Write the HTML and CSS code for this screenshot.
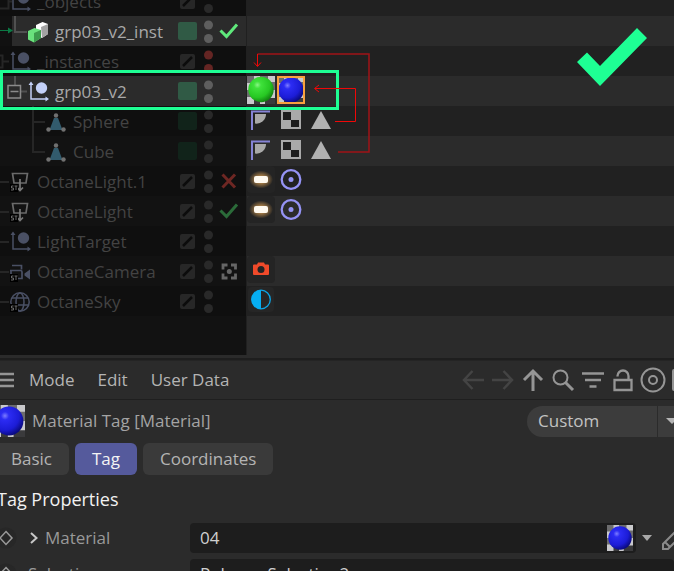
FILE: index.html
```
<!DOCTYPE html>
<html lang="en">
<head>
  <meta charset="UTF-8">
  <meta name="viewport" content="width=device-width, initial-scale=1.0">
  <title>Object Manager</title>
  <link rel="stylesheet" href="styles.css">
</head>
<body>
  <!-- shared icons -->
  <svg class="defs" width="0" height="0" aria-hidden="true">
    <defs>
      <radialGradient id="green-ball" cx="0.36" cy="0.32" r="0.7">
        <stop offset="0" stop-color="#8af487"/><stop offset="0.2" stop-color="#3fe23b"/>
        <stop offset="0.7" stop-color="#27c823"/><stop offset="1" stop-color="#138512"/>
      </radialGradient>
      <radialGradient id="blue-ball" cx="0.36" cy="0.32" r="0.7">
        <stop offset="0" stop-color="#7d7dff"/><stop offset="0.2" stop-color="#2c2cf4"/>
        <stop offset="0.7" stop-color="#1c1cd6"/><stop offset="1" stop-color="#0b0b80"/>
      </radialGradient>
      <radialGradient id="glow">
        <stop offset="0.3" stop-color="#b98a4c"/><stop offset="1" stop-color="#b98a4c" stop-opacity="0"/>
      </radialGradient>
    </defs>
    <symbol id="checker-bg" viewBox="0 0 28 28">
      <path fill="#c9c9cc" d="M0 0h28v28H0z"/>
      <path fill="#6c6c6e" d="M0 0h7v7H0zM13 0h8v6h-8zM21 6h7v8h-7zM0 14h7v7H0z"/>
      <path fill="#3a3a3c" d="M18 22h10v6H18zM7 24h6v4H7z"/>
    </symbol>
    <symbol id="mat-green" viewBox="0 0 28 28">
      <use href="#checker-bg" width="28" height="28"/>
      <circle cx="14" cy="13.500" r="12.700" fill="url(#green-ball)"/>
    </symbol>
    <symbol id="mat-blue" viewBox="0 0 28 28">
      <use href="#checker-bg" width="28" height="28"/>
      <circle cx="14" cy="14" r="12.600" fill="url(#blue-ball)"/>
    </symbol>
    <symbol id="null-obj" viewBox="0 0 22 30">
      <path d="M3 8v15h15" fill="none" stroke="currentColor" stroke-width="1.500"/>
      <path d="M3 5.500l2.500 3.500h-5zM21 23l-3.500-2.500v5z" fill="currentColor"/>
      <circle cx="13.500" cy="12" r="5.700" fill="currentColor"/>
    </symbol>
    <symbol id="poly-obj" viewBox="0 0 20 30">
      <path d="M8 12h4l4.500 12h-13z" fill="#325b6d"/>
      <circle cx="10" cy="9.500" r="2.200" fill="#707070"/>
      <circle cx="2.500" cy="23.500" r="2.200" fill="#707070"/>
      <circle cx="17.500" cy="23.500" r="2.200" fill="#707070"/>
    </symbol>
    <symbol id="st" viewBox="0 0 8 8">
      <path d="M0 0h8v8H0z" fill="#000"/>
      <path d="M3.500 2H1.500v2h2v2H1M4.500 2h3M6 2v4" fill="none" stroke="#6a6a6a"/>
    </symbol>
    <symbol id="light-obj" viewBox="0 0 20 30">
      <path d="M2.500 7.500h15l-1.500 9.500h-12z" fill="none" stroke="#6a6a6a" stroke-width="1.700"/>
      <path d="M10 13v11M7 21.500l3 3 3-3" fill="none" stroke="#7a7a7a" stroke-width="1.700"/>
      <use href="#st" x="0" y="18" width="8" height="8"/>
    </symbol>
    <symbol id="slash" viewBox="0 0 19 30">
      <rect x="2" y="8" width="15" height="15" rx="2" fill="#272727"/>
      <path d="M5 20l9-9" stroke="#0c0c0c" stroke-width="2.500"/>
    </symbol>
    <symbol id="layer" viewBox="0 0 19 30">
      <rect y="6" width="19" height="18" rx="2" fill="currentColor"/>
    </symbol>
    <symbol id="dots" viewBox="0 0 9 30">
      <circle cx="4.500" cy="9" r="4.500" fill="currentColor"/>
      <circle cx="4.500" cy="22.500" r="4.500" fill="currentColor"/>
    </symbol>
    <symbol id="check" viewBox="0 0 20 30">
      <path d="M1.500 14.500l6 6L18 8.500" fill="none" stroke="currentColor" stroke-width="3"/>
    </symbol>
    <symbol id="phong" viewBox="0 0 28 28">
      <path d="M5 24V5.500h18" fill="none" stroke="#8583d6" stroke-width="2"/>
      <path d="M8 8h11a9.500 9.500 0 0 1-11 9.500z" fill="#a9a9a9"/>
    </symbol>
    <symbol id="uvw" viewBox="0 0 28 28">
      <path d="M4 4h20v19H4z" fill="#a9a9a9"/>
      <path d="M6 6h8v8H6zM14 14h8v7h-8z" fill="#1d1d1d"/>
    </symbol>
    <symbol id="selection" viewBox="0 0 28 28">
      <path d="M14 5l10 18H4z" fill="#b1b1b1"/>
    </symbol>
    <symbol id="light-tag" viewBox="0 0 28 28">
      <rect width="28" height="27" rx="4" fill="#242424"/>
      <ellipse cx="14" cy="13.500" rx="12" ry="9" fill="url(#glow)"/>
      <rect x="7" y="10" width="14" height="7" rx="2" fill="#fffaf0"/>
    </symbol>
    <symbol id="target-tag" viewBox="0 0 28 28">
      <circle cx="14" cy="13.500" r="9.300" fill="none" stroke="#9593f5" stroke-width="2.300"/>
      <circle cx="14" cy="13.500" r="2.500" fill="#9593f5"/>
    </symbol>
  </svg>

  <main class="app">
    <section class="objects" aria-label="Objects">
      <ul class="rows">
        <li class="row">
          <div class="tree">
            <svg class="branch w37" viewBox="0 0 37 30"><path class="guide" d="M-5 8.500H8.500v14H-5M9 15.500h3"/><use class="dim-null" href="#null-obj" x="10" width="22" height="30"/></svg>
            <span class="name">_objects</span>
            <svg class="layer"><use href="#slash"/></svg>
            <svg class="dots"><use href="#dots"/></svg>
            <span class="state"></span>
          </div>
          <div class="tags"></div>
        </li>
        <li class="row lit">
          <div class="tree">
            <svg class="branch w55" viewBox="0 0 55 30">
              <path d="M0 0h12v30H0z" fill="#111"/>
              <path d="M0 14.500h10" stroke="#0b7a45"/><path d="M8 11.500l5 3-5 3z" fill="#0b7a45"/>
              <path class="guide" d="M15 0v16h12"/>
              <path d="M36 9l6.500-3 5.500 2v10l-6 4-6-3z" fill="#fff"/><path d="M41 11l7-3v10l-6 4z" fill="#a2a2a2"/>
              <path d="M28 15l6.500-3 6.500 2v8l-7 4.500-6-3z" fill="#6ae27d"/><path d="M34 17l7-3v8l-7 4.500z" fill="#3d9b4d"/>
            </svg>
            <span class="name">grp03_v2_inst</span>
            <svg class="layer on"><use href="#layer"/></svg>
            <svg class="dots"><use href="#dots"/></svg>
            <svg class="state ok"><use href="#check"/></svg>
          </div>
          <div class="tags"></div>
        </li>
        <li class="row">
          <div class="tree">
            <svg class="branch w37" viewBox="0 0 37 30"><path class="guide" d="M-5 9.500H2.500v12H-5M3 15.500h6"/><use class="dim-null" href="#null-obj" x="10" width="22" height="30"/></svg>
            <span class="name">_instances</span>
            <svg class="layer"><use href="#slash"/></svg>
            <svg class="dots red"><use href="#dots"/></svg>
            <span class="state"></span>
          </div>
          <div class="tags"></div>
        </li>
        <li class="row lit">
          <div class="tree">
            <svg class="branch w55" viewBox="0 0 55 30">
              <path class="guide" d="M15 0v9M21 15.500h6"/>
              <path d="M8 9.500h12.500v12.500H8zM10.500 15.500h8" fill="none" stroke="#8a8a8a" stroke-width="1.500"/>
              <use class="lit-null" href="#null-obj" x="28" width="22" height="30"/>
            </svg>
            <span class="name">grp03_v2</span>
            <svg class="layer on"><use href="#layer"/></svg>
            <svg class="dots"><use href="#dots"/></svg>
            <span class="state"></span>
          </div>
          <div class="tags">
            <svg class="tag"><use href="#mat-green"/></svg>
            <svg class="tag selected"><use href="#mat-blue"/></svg>
          </div>
        </li>
        <li class="row">
          <div class="tree">
            <svg class="branch w73" viewBox="0 0 73 30"><path class="guide" d="M33 0v30M33 16h12"/><use href="#poly-obj" x="46" width="20" height="30"/></svg>
            <span class="name">Sphere</span>
            <svg class="layer off"><use href="#layer"/></svg>
            <svg class="dots"><use href="#dots"/></svg>
            <span class="state"></span>
          </div>
          <div class="tags">
            <svg class="tag"><use href="#phong"/></svg>
            <svg class="tag"><use href="#uvw"/></svg>
            <svg class="tag"><use href="#selection"/></svg>
          </div>
        </li>
        <li class="row">
          <div class="tree">
            <svg class="branch w73" viewBox="0 0 73 30"><path class="guide" d="M33 0v16h12"/><use href="#poly-obj" x="46" width="20" height="30"/></svg>
            <span class="name">Cube</span>
            <svg class="layer off"><use href="#layer"/></svg>
            <svg class="dots"><use href="#dots"/></svg>
            <span class="state"></span>
          </div>
          <div class="tags">
            <svg class="tag"><use href="#phong"/></svg>
            <svg class="tag"><use href="#uvw"/></svg>
            <svg class="tag"><use href="#selection"/></svg>
          </div>
        </li>
        <li class="row">
          <div class="tree">
            <svg class="branch w37" viewBox="0 0 37 30"><path class="guide" d="M0 16h9"/><use href="#light-obj" x="10" width="20" height="30"/></svg>
            <span class="name">OctaneLight.1</span>
            <svg class="layer"><use href="#slash"/></svg>
            <svg class="dots"><use href="#dots"/></svg>
            <svg class="state" viewBox="0 0 20 30"><path d="M3.500 8.500l12.500 13M16 8.500l-12.500 13" stroke="#6e2723" stroke-width="3"/></svg>
          </div>
          <div class="tags">
            <svg class="tag"><use href="#light-tag"/></svg>
            <svg class="tag"><use href="#target-tag"/></svg>
          </div>
        </li>
        <li class="row">
          <div class="tree">
            <svg class="branch w37" viewBox="0 0 37 30"><path class="guide" d="M0 16h9"/><use href="#light-obj" x="10" width="20" height="30"/></svg>
            <span class="name">OctaneLight</span>
            <svg class="layer"><use href="#slash"/></svg>
            <svg class="dots"><use href="#dots"/></svg>
            <svg class="state dim-ok"><use href="#check"/></svg>
          </div>
          <div class="tags">
            <svg class="tag"><use href="#light-tag"/></svg>
            <svg class="tag"><use href="#target-tag"/></svg>
          </div>
        </li>
        <li class="row">
          <div class="tree">
            <svg class="branch w37" viewBox="0 0 37 30"><path class="guide" d="M0 16h9"/><use class="dim-null" href="#null-obj" x="10" width="22" height="30"/></svg>
            <span class="name">LightTarget</span>
            <svg class="layer"><use href="#slash"/></svg>
            <svg class="dots"><use href="#dots"/></svg>
            <span class="state"></span>
          </div>
          <div class="tags"></div>
        </li>
        <li class="row">
          <div class="tree">
            <svg class="branch w37" viewBox="0 0 37 30">
              <path class="guide" d="M0 16h9"/>
              <path d="M12 9.500h9.500v4M10 14.500h10.500q1.500 0 1.500 1.500v6.500h-5M11 15v4" fill="none" stroke="#4a5064" stroke-width="1.700"/>
              <path d="M24.500 17.500l5.500-4v10l-5.500-4z" fill="#4a5064"/>
              <use href="#st" x="10" y="18" width="8" height="8"/>
            </svg>
            <span class="name">OctaneCamera</span>
            <svg class="layer"><use href="#slash"/></svg>
            <svg class="dots"><use href="#dots"/></svg>
            <svg class="state" viewBox="0 0 20 30"><path d="M4 13.500V9h4.500M12 9h4.500v4.500M16.500 17.500V22H12M8.500 22H4v-4.500" fill="none" stroke="#666" stroke-width="2.800"/><circle cx="10.300" cy="15.500" r="2.500" fill="#666"/></svg>
          </div>
          <div class="tags">
            <svg class="tag" viewBox="0 0 28 28">
              <rect width="28" height="27" rx="4" fill="#242424"/>
              <path d="M7 8.500h3l1-2h6l1 2h3q1 0 1 1v8.500q0 1-1 1H7q-1 0-1-1V9.500q0-1 1-1z" fill="#f04a2a"/>
              <circle cx="14" cy="13.500" r="3.500" fill="#242424"/>
            </svg>
          </div>
        </li>
        <li class="row">
          <div class="tree">
            <svg class="branch w37" viewBox="0 0 37 30">
              <path class="guide" d="M0 16h9"/>
              <g fill="none" stroke="#4a5064" stroke-width="1.500"><circle cx="20" cy="16" r="9.200"/><ellipse cx="20" cy="16" rx="4" ry="9"/><path d="M12 12h16M11 19h18"/></g>
              <use href="#st" x="10" y="18" width="8" height="8"/>
            </svg>
            <span class="name">OctaneSky</span>
            <svg class="layer"><use href="#slash"/></svg>
            <svg class="dots"><use href="#dots"/></svg>
            <span class="state"></span>
          </div>
          <div class="tags">
            <svg class="tag" viewBox="0 0 28 28">
              <rect x="1" y="1" width="26" height="25" rx="4" fill="#262626"/>
              <circle cx="14" cy="13.500" r="9.300" fill="none" stroke="#0ca5e6" stroke-width="1.300"/>
              <path d="M14 4a9.500 9.500 0 0 0 0 19z" fill="#06aef2"/>
            </svg>
          </div>
        </li>
        <li class="row empty"><div class="tree"></div><div class="tags"></div></li>
      </ul>

      <!-- annotations drawn over the list -->
      <div class="highlight"></div>
      <svg class="notes" viewBox="0 0 674 160" width="674" height="160">
        <path d="M257.500 54H369v98h-31" fill="none" stroke="#a01317" stroke-width="1.500"/>
        <path d="M257.500 54v12M254 62.500l3.500 4 3.500-4M335 121.500h20.500v-33H315M319 85l-4.500 3.500 4.500 3.500" fill="none" stroke="#f00808"/>
        <path d="M577 62l10-9.500 13 13.500 37-38 10 10-47 48z" fill="#1eff94"/>
      </svg>
    </section>

    <section class="attributes" aria-label="Attributes">
      <nav class="menubar">
        <button class="icon-btn burger" aria-label="Menu"><svg width="14" height="20" viewBox="0 0 14 20"><path d="M0 4h14M0 10h14M0 16h14" stroke="#959595" stroke-width="2.500"/></svg></button>
        <button class="menu">Mode</button>
        <button class="menu">Edit</button>
        <button class="menu">User Data</button>
        <div class="tools">
          <button class="icon-btn" aria-label="Back"><svg viewBox="0 0 26 26"><path d="M24 13H4M12.500 4L4 13l8.500 9" fill="none" stroke="#444" stroke-width="2.500"/></svg></button>
          <button class="icon-btn" aria-label="Forward"><svg viewBox="0 0 26 26"><path d="M2 13h20M13.500 4l8.500 9-8.500 9" fill="none" stroke="#444" stroke-width="2.500"/></svg></button>
          <button class="icon-btn" aria-label="Up"><svg viewBox="0 0 26 26"><path d="M13 24V4M4 13l9-9 9 9" fill="none" stroke="#959595" stroke-width="3"/></svg></button>
          <button class="icon-btn" aria-label="Search"><svg viewBox="0 0 26 26"><circle cx="10.500" cy="10.500" r="7" fill="none" stroke="#959595" stroke-width="2"/><path d="M15.500 15.500l7.500 7.500" stroke="#959595" stroke-width="3"/></svg></button>
          <button class="icon-btn" aria-label="Filter"><svg viewBox="0 0 26 26"><path d="M2 6.500h22M5 13h16M9.500 19.500h7" stroke="#959595" stroke-width="2.700"/></svg></button>
          <button class="icon-btn" aria-label="Lock"><svg viewBox="0 0 26 26"><path d="M4.500 13h17v10h-17zM7.500 9.500V9a5.500 5.500 0 0 1 11 0v4" fill="none" stroke="#959595" stroke-width="2.300"/></svg></button>
          <button class="icon-btn" aria-label="Focus"><svg viewBox="0 0 26 26"><circle cx="13" cy="13" r="11.500" fill="none" stroke="#959595" stroke-width="2"/><circle cx="13" cy="13" r="4" fill="none" stroke="#959595" stroke-width="2"/></svg></button>
          <button class="icon-btn" aria-label="New window"><svg viewBox="0 0 26 26"><rect x="3" y="3" width="20" height="20" rx="1" fill="none" stroke="#959595" stroke-width="2"/></svg></button>
        </div>
      </nav>

      <header class="title-row">
        <svg class="title-icon"><use href="#mat-blue"/></svg>
        <span class="title">Material Tag [Material]</span>
        <button class="preset">Custom</button>
        <button class="preset-arrow" aria-label="Presets"><svg width="12" height="6" viewBox="0 0 12 6"><path d="M0 0h12L6 6z" fill="#b5b5b5"/></svg></button>
      </header>

      <div class="tabs">
        <button class="tab">Basic</button>
        <button class="tab active">Tag</button>
        <button class="tab">Coordinates</button>
      </div>

      <h2>Tag Properties</h2>

      <div class="field">
        <svg class="key" viewBox="0 0 22 22"><circle cx="10" cy="11" r="10.500" fill="#272727"/><path d="M10 4.500l6 6.500-6 6.500L4 11z" fill="none" stroke="#9a9a9a" stroke-width="1.500"/></svg>
        <svg class="chevron" viewBox="0 0 8 12"><path d="M1 1l5.500 5L1 11" fill="none" stroke="#c8c8c8" stroke-width="2"/></svg>
        <label for="material">Material</label>
        <div class="box">
          <input id="material" type="text" value="04">
          <svg class="swatch"><use href="#mat-blue"/></svg>
        </div>
        <svg class="drop" viewBox="0 0 10 6"><path d="M0 0h10L5 6z" fill="#a8a8a8"/></svg>
        <svg class="pencil" viewBox="0 0 24 26"><path d="M2 24v-5L17 4l5 5L7 24zM4 17l5 5" fill="none" stroke="#8a8a8a" stroke-width="2"/></svg>
      </div>
      <div class="field">
        <svg class="key" viewBox="0 0 22 22"><circle cx="10" cy="11" r="10.500" fill="#272727"/><path d="M10 4.500l6 6.500-6 6.500L4 11z" fill="none" stroke="#9a9a9a" stroke-width="1.500"/></svg>
        <label for="selection-name">Selection</label>
        <div class="box wide">
          <input id="selection-name" type="text" value="Polygon Selection2">
        </div>
      </div>
    </section>
  </main>
</body>
</html>
```

FILE: styles.css
```
:root {
  --bg: #2b2b2b;
  --row-dark: #212121;
  --row-light: #2b2b2b;
  --text: #b4b4b4;
  --accent: #1eff94;
}

* {
  box-sizing: border-box;
  margin: 0;
  padding: 0;
}

body {
  height: 100vh;
  overflow: hidden;
  background-color: var(--bg);
  color: var(--text);
  font-family: 'Open Sans', 'Noto Sans', sans-serif;
  font-size: 17px;
  line-height: 24px;
}

button,
input {
  font: inherit;
  color: inherit;
  background: none;
  border: none;
}

svg {
  display: block;
  flex: none;
}

.defs {
  position: absolute;
}

/* object list */
.objects {
  position: relative;
  overflow: hidden;
  border-bottom: 2px solid #1e1e1e;
}

.rows {
  list-style: none;
  margin-top: -14px;
  padding-bottom: 3px;
}

.row {
  display: grid;
  grid-template-columns: 247px 1fr;
  height: 30px;
  background-color: var(--row-dark);
}

.row:nth-child(even) {
  background-color: var(--row-light);
}

.tree {
  display: flex;
  align-items: center;
  background-color: #0f0f0f;
  border-right: 1px solid #202020;
  color: #434343;
}

.row:nth-child(even) .tree {
  background-color: #121212;
}

.row.lit .tree {
  background-color: #2b2b2b;
  color: #a8a8a8;
}

.row.empty {
  height: 39px;
}

.branch {
  height: 30px;
}

.w37 {
  width: 37px;
}

.w55 {
  width: 55px;
}

.w73 {
  width: 73px;
}

.guide {
  fill: none;
  stroke: #262626;
  stroke-width: 2;
}

.lit .guide {
  stroke: #505050;
}

.dim-null {
  color: #4a5064;
}

.lit-null {
  color: #c3d0f7;
}

.name {
  flex: 1;
  padding-top: 2px;
  white-space: nowrap;
}

.layer {
  width: 19px;
  height: 30px;
  margin-right: 7px;
}

.layer.on {
  color: #305a45;
}

.layer.off {
  color: #11231a;
}

.dots {
  width: 9px;
  height: 30px;
  margin-right: 6px;
  color: #292929;
}

.lit .dots {
  color: #5e5e5e;
}

.dots.red {
  color: #642523;
}

.state {
  flex: none;
  width: 20px;
  height: 30px;
  margin-right: 7px;
}

.state.ok {
  color: #5fe87b;
}

.state.dim-ok {
  color: #2b6b39;
}

.tags {
  display: flex;
  gap: 2px;
}

.tag {
  width: 28px;
  height: 28px;
}

.tag.selected {
  outline: 2px solid #f9a13e;
  outline-offset: -2px;
}

.highlight {
  position: absolute;
  top: 70px;
  left: 0;
  width: 339px;
  height: 40px;
  border: 3px solid var(--accent);
}

.notes {
  position: absolute;
  top: 0;
  left: 0;
}

/* attribute manager */
.attributes {
  border-top: 1px solid #242424;
}

.menubar {
  display: flex;
  align-items: center;
  height: 39px;
  border-bottom: 1px solid #1f1f1f;
  overflow: hidden;
}

.burger {
  margin-right: 15px;
}

.menu {
  margin-right: 23px;
  white-space: nowrap;
}

.tools {
  display: flex;
  gap: 4px;
  margin-left: auto;
  margin-right: -22px;
}

.tools svg {
  width: 26px;
  height: 26px;
}

.title-row {
  display: flex;
  align-items: center;
  height: 42px;
}

.title-icon {
  width: 32px;
  height: 32px;
  margin-left: -7px;
}

.title {
  flex: 1;
  margin-left: 7px;
  color: #a4a4a4;
}

.preset {
  width: 130px;
  height: 31px;
  padding-left: 11px;
  text-align: left;
  background-color: #3c3c3c;
  border-radius: 16px 0 0 16px;
  color: #c2c2c2;
}

.preset-arrow {
  width: 16px;
  height: 31px;
  margin-left: 1px;
  padding-left: 8px;
  background-color: #3c3c3c;
  overflow: hidden;
}

.tabs {
  display: flex;
  gap: 6px;
  margin: 1px 0 0 -6px;
}

.tab {
  height: 32px;
  padding: 0 17px;
  border-radius: 6px;
  background-color: #3a3a3a;
}

.tab.active {
  background-color: #555a9c;
  color: #f4f4f4;
}

h2 {
  margin: 12px 0 12px -3px;
  font-size: 18px;
  font-weight: 400;
  line-height: 24px;
  color: #f2f2f2;
}

.field {
  display: flex;
  align-items: center;
  height: 30px;
  margin-bottom: 6px;
}

.key {
  width: 22px;
  height: 22px;
  margin-left: -4px;
  margin-right: 10px;
}

.chevron {
  width: 8px;
  height: 12px;
  margin-left: 2px;
  margin-right: 7px;
}

.field label {
  flex: 1;
  color: #999;
}

.box {
  display: flex;
  align-items: center;
  width: 446px;
  height: 30px;
  padding: 0 3px 0 10px;
  background-color: #1d1d1d;
  border-radius: 4px;
}

.box.wide {
  width: 484px;
}

.box input {
  flex: 1;
  min-width: 0;
  color: #d0d0d0;
}

.swatch {
  width: 26px;
  height: 26px;
}

.drop {
  width: 10px;
  height: 6px;
  margin: 0 9px 0 6px;
}

.pencil {
  width: 24px;
  height: 26px;
  margin-right: -11px;
}
```
